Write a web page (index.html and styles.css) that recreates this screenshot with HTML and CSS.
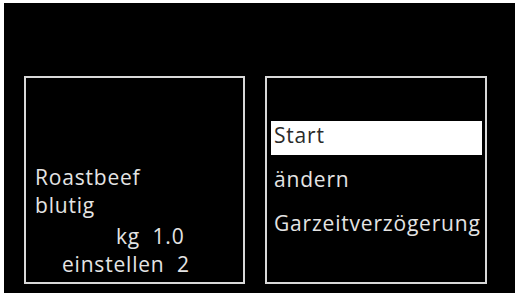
FILE: index.html
```html
<!DOCTYPE html>
<html lang="de">
<head>
<meta charset="utf-8">
<title>Roastbeef</title>
<link rel="stylesheet" href="styles.css">
</head>
<body>
<div class="screen">
  <div class="panels">
    <div class="panel info">
      <div class="name">
        <div class="line">Roastbeef</div>
        <div class="line">blutig</div>
      </div>
      <div class="values">
        <div class="line weight">kg  1.0</div>
        <div class="line level">einstellen  2</div>
      </div>
    </div>
    <div class="panel menu">
      <div class="item selected">Start</div>
      <div class="item">ändern</div>
      <div class="item">Garzeitverzögerung</div>
    </div>
  </div>
</div>
</body>
</html>
```
FILE: styles.css
```css
html, body {
  margin: 0;
  padding: 0;
  background: #ffffff;
  height: 100%;
}
body {
  font-family: "Open Sans", "Noto Sans", sans-serif;
  font-size: 21px;
  font-weight: 500;
  letter-spacing: 0.8px;
  color: #e4e4e4;
  overflow: hidden;
}
.screen {
  margin: 3px 0 0 4px;
  background: #000000;
  height: calc(100% - 3px);
  box-sizing: border-box;
  padding: 73px 0 0 20px;
}
.panels {
  display: flex;
  gap: 20px;
}
.panel {
  border: 2px solid #d8d8d8;
  height: 208px;
  box-sizing: border-box;
}
.info {
  width: 221px;
  display: flex;
  flex-direction: column;
  justify-content: flex-end;
  padding: 0 0 4px 9px;
}
.line {
  line-height: 28px;
  white-space: pre;
}
.name {
  margin-bottom: 3px;
}
.weight {
  padding-left: 81px;
}
.level {
  padding-left: 27px;
}
.menu {
  width: 222px;
  display: flex;
  flex-direction: column;
  gap: 10px;
  padding: 43px 3px 0 4px;
}
.item {
  line-height: 28px;
  padding: 0 0 6px 3px;
  white-space: nowrap;
}
.selected {
  background: #ffffff;
  color: #2a2a2a;
}
```
